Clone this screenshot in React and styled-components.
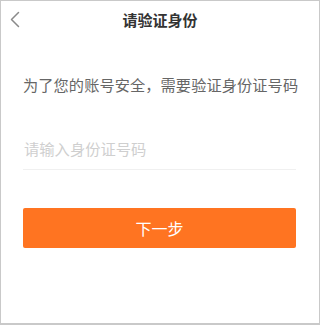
import React, { useState } from 'react';
import styled, { createGlobalStyle } from 'styled-components';

const GlobalStyle = createGlobalStyle`
    html, body {
        margin: 0;
        padding: 0;
        background: #fff;
    }
    body {
        font-family: "Noto Sans CJK SC", "Noto Sans", sans-serif;
    }
`;

const Page = styled.div`
    width: 320px;
    height: 325px;
    box-sizing: border-box;
    border: 1px solid #c9c9c9;
    border-bottom-width: 2px;
    background: #fff;
    display: flex;
    flex-direction: column;
`;

const NavBar = styled.div`
    height: 32px;
    padding-top: 2px;
    display: grid;
    grid-template-columns: 40px 1fr 40px;
    align-items: center;
`;

const BackButton = styled.button`
    border: 0;
    background: none;
    padding: 0 0 0 8px;
    height: 32px;
    display: flex;
    align-items: center;
    cursor: pointer;
`;

const Title = styled.h1`
    margin: 0;
    font-size: 15px;
    font-weight: 700;
    color: #333;
    text-align: center;
`;

const Body = styled.div`
    padding: 0 23px 0 22px;
    display: flex;
    flex-direction: column;
`;

const Tip = styled.p`
    margin: 39px 0 0;
    font-size: 15.2px;
    line-height: 20px;
    color: #666;
    text-align: center;
    white-space: nowrap;
    letter-spacing: 0.1px;
`;

const Field = styled.input`
    margin-top: 40px;
    height: 36px;
    box-sizing: border-box;
    border: 0;
    border-bottom: 1px solid #f0f0f0;
    padding: 0 1px 8px;
    outline: none;
    font-family: inherit;
    font-size: 15.3px;
    color: #333;
    &::placeholder {
        color: #cfcfcf;
    }
`;

const NextButton = styled.button`
    margin-top: 38px;
    height: 40px;
    border: 0;
    border-radius: 2px;
    background: #ff7421;
    color: #fff;
    font-family: inherit;
    font-size: 16px;
    cursor: pointer;
`;

const App = () => {
    const [idNo, setIdNo] = useState('');

    return (
        <Page>
            <GlobalStyle />
            <NavBar>
                <BackButton aria-label="back">
                    <svg width="12" height="17" viewBox="0 0 12 17">
                        <path d="M9.5 1.5 L2.5 8.5 L9.5 15.5" fill="none" stroke="#8a8a8a" strokeWidth="1.5" strokeLinecap="round" strokeLinejoin="round" />
                    </svg>
                </BackButton>
                <Title>请验证身份</Title>
                <div />
            </NavBar>
            <Body>
                <Tip>为了您的账号安全，需要验证身份证号码</Tip>
                <Field placeholder="请输入身份证号码" value={idNo} onChange={e => setIdNo(e.target.value)} />
                <NextButton>下一步</NextButton>
            </Body>
        </Page>
    );
};

export default App;
